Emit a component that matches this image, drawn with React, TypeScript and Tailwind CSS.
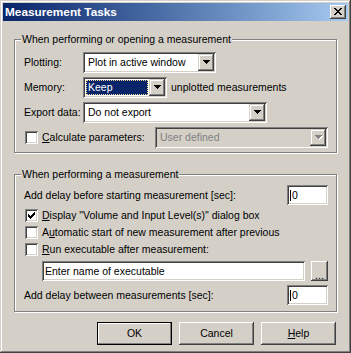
import React from "react";

const sunken =
  "shadow-[inset_1px_1px_#808080,inset_-1px_-1px_#ffffff,inset_2px_2px_#404040,inset_-2px_-2px_#d4d0c8]";
const raised =
  "shadow-[inset_-1px_-1px_#404040,inset_1px_1px_#d4d0c8,inset_-2px_-2px_#808080,inset_2px_2px_#ffffff]";
const push =
  "shadow-[inset_-1px_-1px_#404040,inset_1px_1px_#ffffff,inset_-2px_-2px_#808080,inset_2px_2px_#d4d0c8]";

function Arrow({ disabled }: { disabled?: boolean }) {
  const d = "M0 0h7v1H0zM1 1h5v1H1zM2 2h3v1H2zM3 3h1v1H3z";
  return (
    <svg width="8" height="5" viewBox="0 0 8 5" shapeRendering="crispEdges">
      {disabled && <path d={d} fill="#ffffff" transform="translate(1 1)" />}
      <path d={d} fill={disabled ? "#808080" : "#000000"} />
    </svg>
  );
}

function Combo({
  className,
  text,
  selected,
  disabled,
}: {
  className: string;
  text: string;
  selected?: boolean;
  disabled?: boolean;
}) {
  return (
    <div
      className={`flex h-[21px] p-[2px] ${sunken} ${disabled ? "bg-[#d4d0c8] text-[#808080]" : "bg-white"} ${className}`}
    >
      <div className="flex min-w-0 flex-1 p-[1px]">
        {selected ? (
          <div className="flex flex-1 items-center border border-dotted border-[#f5db95] bg-[#0a246a] pl-[1px] text-white">
            {text}
          </div>
        ) : (
          <div className="flex flex-1 items-center pl-[2px]">{text}</div>
        )}
      </div>
      <div className={`flex w-[16px] items-center justify-center bg-[#d4d0c8] pl-[1px] ${raised}`}>
        <Arrow disabled={disabled} />
      </div>
    </div>
  );
}

function Check({ checked }: { checked?: boolean }) {
  return (
    <div className={`h-[13px] w-[13px] shrink-0 bg-white p-[3px] ${sunken}`}>
      {checked && (
        <svg width="7" height="7" viewBox="0 0 7 7" shapeRendering="crispEdges" className="block">
          <path
            d="M6 0h1v1H6zM5 1h2v1H5zM0 2h1v1H0zM4 2h3v1H4zM0 3h2v1H0zM3 3h3v1H3zM0 4h5v1H0zM1 5h3v1H1zM2 6h1v1H2z"
            fill="#000"
          />
        </svg>
      )}
    </div>
  );
}

function CheckRow({ checked, children }: { checked?: boolean; children: React.ReactNode }) {
  return (
    <div className="flex h-[17px] items-center gap-[4px] pl-[1px]">
      <Check checked={checked} />
      <span>{children}</span>
    </div>
  );
}

function Field({ text, className, caret }: { text: string; className: string; caret?: boolean }) {
  return (
    <div className={`flex h-[20px] items-center bg-white pl-[3px] ${sunken} ${className}`}>
      {caret && <span className="mr-[1px] h-[11px] w-[1px] bg-black" />}
      <span>{text}</span>
    </div>
  );
}

function Group({ title, className, children }: { title: string; className: string; children: React.ReactNode }) {
  return (
    <div
      className={`relative flex flex-col border border-[#808080] pl-[9px] pr-[8px] shadow-[1px_1px_0_#ffffff,inset_1px_1px_0_#ffffff] ${className}`}
    >
      <span className="absolute left-[6px] top-[-7px] bg-[#d4d0c8] px-[1px] leading-[13px]">{title}</span>
      {children}
    </div>
  );
}

function Button({ children, isDefault }: { children: React.ReactNode; isDefault?: boolean }) {
  if (isDefault) {
    return (
      <div className="h-[23px] w-[75px] border border-black">
        <div className="flex h-full items-center justify-center shadow-[inset_-1px_-1px_#808080,inset_1px_1px_#ffffff]">
          {children}
        </div>
      </div>
    );
  }
  return <div className={`flex h-[23px] w-[75px] items-center justify-center ${push}`}>{children}</div>;
}

export default function App() {
  return (
    <div
      className={`flex h-[353px] w-[351px] flex-col bg-[#d4d0c8] p-[3px] font-['Liberation_Sans',Arial,sans-serif] text-[10.5px] leading-[13px] text-black ${raised}`}
    >
      {/* title bar */}
      <div className="flex h-[18px] items-center bg-gradient-to-r from-[#0a246a] to-[#a6caf0] pl-[2px] pr-[2px]">
        <span className="flex-1 text-[11.8px] font-bold text-white">Measurement Tasks</span>
        <div className={`flex h-[14px] w-[16px] items-start justify-start bg-[#d4d0c8] pl-[4px] pt-[3px] ${push}`}>
          <svg width="8" height="7" viewBox="0 0 8 7" shapeRendering="crispEdges" className="block">
            <path
              d="M0 0h2v1H0zM6 0h2v1H6zM1 1h2v1H1zM5 1h2v1H5zM2 2h4v1H2zM3 3h2v1H3zM2 4h4v1H2zM1 5h2v1H1zM5 5h2v1H5zM0 6h2v1H0zM6 6h2v1H6z"
              fill="#000"
            />
          </svg>
        </div>
      </div>

      <div className="flex flex-col px-[11px]">
        <Group title="When performing or opening a measurement" className="mt-[18px] h-[114px] gap-[4px] pt-[12px]">
          <div className="flex h-[21px] items-center">
            <span className="w-[59px]">Plotting:</span>
            <Combo className="w-[133px]" text="Plot in active window" />
          </div>
          <div className="flex h-[21px] items-center">
            <span className="w-[59px]">Memory:</span>
            <Combo className="w-[84px]" text="Keep" selected />
            <span className="ml-[4px]">unplotted measurements</span>
          </div>
          <div className="flex h-[21px] items-center">
            <span className="w-[59px]">Export data:</span>
            <Combo className="w-[184px]" text="Do not export" />
          </div>
          <div className="flex h-[21px] items-center">
            <div className="flex items-center gap-[4px] pl-[1px]">
              <Check />
              <span>
                <span className="underline">C</span>alculate parameters:
              </span>
            </div>
            <Combo className="ml-auto w-[173px]" text="User defined" disabled />
          </div>
        </Group>

        <Group title="When performing a measurement" className="mt-[21px] h-[138px] pt-[10px]">
          <div className="flex h-[20px] items-center justify-between">
            <span>Add delay before starting measurement [sec]:</span>
            <Field className="w-[41px]" text="0" caret />
          </div>
          <div className="mt-[2px] flex flex-col">
            <CheckRow checked>
              <span className="underline">D</span>isplay &quot;Volume and Input Level(s)&quot; dialog box
            </CheckRow>
            <CheckRow>
              A<span className="underline">u</span>tomatic start of new measurement after previous
            </CheckRow>
            <CheckRow>
              <span className="underline">R</span>un executable after measurement:
            </CheckRow>
          </div>
          <div className="mt-[3px] flex h-[20px] items-center gap-[6px] pl-[18px]">
            <Field className="w-[263px]" text="Enter name of executable" />
            <div className={`flex h-[20px] w-[17px] items-end justify-center pb-[2px] leading-[8px] ${push}`}>
              ...
            </div>
          </div>
          <div className="mt-[4px] flex h-[20px] items-center justify-between">
            <span>Add delay between measurements [sec]:</span>
            <Field className="w-[41px]" text="0" caret />
          </div>
        </Group>

        <div className="mr-[1px] mt-[10px] flex justify-end gap-[7px]">
          <Button isDefault>OK</Button>
          <Button>Cancel</Button>
          <Button>
            <span className="underline">H</span>elp
          </Button>
        </div>
      </div>
    </div>
  );
}
